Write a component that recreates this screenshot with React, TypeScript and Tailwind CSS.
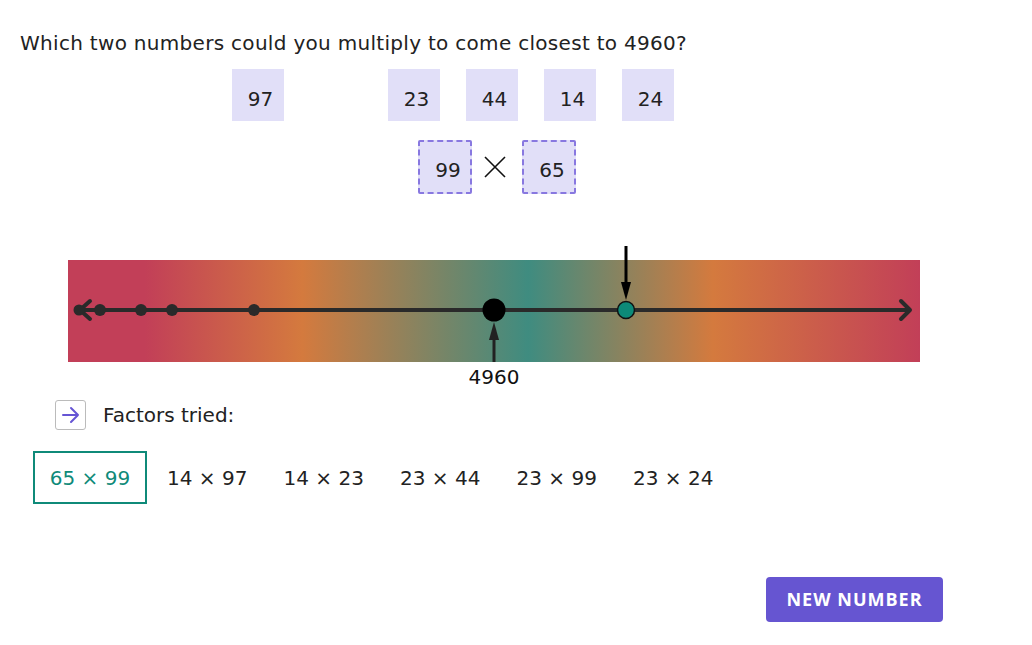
import React from "react";

const tiles: (number | null)[] = [97, null, 23, 44, 14, 24];
const tried = ["14 × 97", "14 × 23", "23 × 44", "23 × 99", "23 × 24"];

function NumberLine() {
  const dots = [100, 141, 172, 254];
  return (
    <svg width="852" height="150" viewBox="0 0 852 150" className="block">
      <defs>
        <linearGradient id="band" x1="0" x2="1" y1="0" y2="0">
          <stop offset="0" stopColor="#c23f58" />
          <stop offset="0.09" stopColor="#c23f58" />
          <stop offset="0.275" stopColor="#d47a3e" />
          <stop offset="0.54" stopColor="#3f8c80" />
          <stop offset="0.757" stopColor="#d47a3e" />
          <stop offset="1" stopColor="#c23f58" />
        </linearGradient>
      </defs>
      <rect x="0" y="20" width="852" height="102" fill="url(#band)" />
      <line x1="12" y1="70" x2="842" y2="70" stroke="#2a2a2a" strokeWidth="4" />
      <polyline points="22,61 12,70 22,79" fill="none" stroke="#2a2a2a" strokeWidth="4" strokeLinecap="round" strokeLinejoin="round" />
      <polyline points="833,61 842,70 833,79" fill="none" stroke="#2a2a2a" strokeWidth="4" strokeLinecap="round" strokeLinejoin="round" />
      <circle cx="11" cy="70" r="5.5" fill="#2a2a2a" />
      {dots.map((x) => (
        <circle key={x} cx={x - 68} cy="70" r="6" fill="#2a2a2a" />
      ))}
      <circle cx="426" cy="70" r="11.5" fill="#000" />
      <line x1="426" y1="122" x2="426" y2="96" stroke="#222" strokeWidth="3" />
      <polygon points="426,82 421,100 431,100" fill="#222" />
      <line x1="558" y1="6" x2="558" y2="44" stroke="#000" strokeWidth="3" />
      <polygon points="558,60 553,42 563,42" fill="#000" />
      <circle cx="558" cy="70" r="8.5" fill="#0d8a78" stroke="#111" strokeWidth="1.5" />
      <text x="426" y="144" textAnchor="middle" fontSize="20" fill="#111" fontFamily="'DejaVu Sans', sans-serif">
        4960
      </text>
    </svg>
  );
}

export default function App() {
  return (
    <div className="w-[1032px] h-[645px] bg-white text-[#222] relative" style={{ fontFamily: "'DejaVu Sans', sans-serif" }}>
      <div className="pt-[28px] pl-[20px] text-[20px] leading-[30px] tracking-[0.3px]">Which two numbers could you multiply to come closest to 4960?</div>

      {/* tiles */}
      <div className="flex gap-[26px] pl-[232px] mt-[11px]">
        {tiles.map((t, i) => (
          <div key={i} className={`w-[52px] h-[52px] flex items-center justify-center pt-[8px] pl-[5px] text-[20px] ${t ? "bg-[#e1dff8]" : ""}`}>
            {t}
          </div>
        ))}
      </div>

      {/* chosen */}
      <div className="flex items-center pl-[418px] mt-[19px]">
        <div className="w-[54px] h-[54px] border-2 border-dashed border-[#8878e0] bg-[#e1dff8] rounded-[2px] flex items-center justify-center pt-[6px] pl-[6px] text-[20px]">99</div>
        <div className="w-[50px] flex justify-center pr-[4px]">
          <svg width="24" height="24" viewBox="0 0 24 24">
            <path d="M2 2 L22 22 M22 2 L2 22" stroke="#111" strokeWidth="1.6" />
          </svg>
        </div>
        <div className="w-[54px] h-[54px] border-2 border-dashed border-[#8878e0] bg-[#e1dff8] rounded-[2px] flex items-center justify-center pt-[6px] pl-[6px] text-[20px]">65</div>
      </div>

      {/* number line */}
      <div className="pl-[68px] mt-[46px]">
        <NumberLine />
      </div>

      {/* factors tried */}
      <div className="flex items-center gap-[17px] pl-[55px] mt-[10px]">
        <div className="w-[31px] h-[30px] border border-[#bbb] rounded-[3px] flex items-center justify-center">
          <svg width="20" height="20" viewBox="0 0 20 20">
            <path d="M2 10 H17 M10 3 L17 10 L10 17" fill="none" stroke="#6655d4" strokeWidth="2" strokeLinecap="round" strokeLinejoin="round" />
          </svg>
        </div>
        <span className="text-[20px]">Factors tried:</span>
      </div>

      <div className="flex items-center pl-[33px] mt-[21px]">
        <div className="w-[114px] h-[53px] border-2 border-[#0f8a79] text-[#0f8a79] flex items-center justify-center text-[20px]">65 × 99</div>
        <div className="flex text-[20px]">
          {tried.map((t) => (
            <div key={t} className="w-[116.5px] pl-[20px]">{t}</div>
          ))}
        </div>
      </div>

      <button className="absolute left-[766px] top-[577px] w-[177px] h-[45px] rounded-[4px] bg-[#6655d1] text-white font-bold text-[18px] tracking-[1px]" style={{ fontFamily: "'Open Sans', sans-serif" }}>
        NEW NUMBER
      </button>
    </div>
  );
}
